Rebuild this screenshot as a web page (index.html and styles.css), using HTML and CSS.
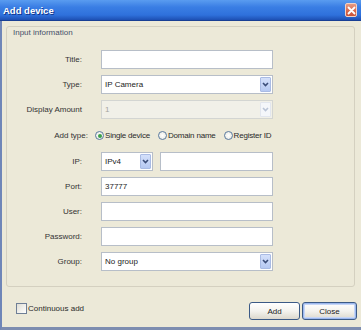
FILE: index.html
```html
<!DOCTYPE html>
<html lang="en">
<head>
    <meta charset="UTF-8">
    <title>Add device</title>
    <link rel="stylesheet" href="styles.css">
</head>
<body>
    <div class="window">
        <div class="titlebar">
            <span class="title">Add device</span>
            <span class="close-x">
                <svg width="9" height="9" viewBox="0 0 9 9"><path d="M1.5 1.5 L7.5 7.5 M7.5 1.5 L1.5 7.5" stroke="#fff" stroke-width="1.8" stroke-linecap="round"/></svg>
            </span>
        </div>

        <div class="groupbox">
            <div class="group-label">Input information</div>
            <div class="form">
                <span class="label">Title:</span>
                <div class="field"></div>

                <span class="label">Type:</span>
                <div class="field select">
                    <span class="value">IP Camera</span>
                    <span class="arrow">
                        <svg width="7" height="5" viewBox="0 0 7 5"><path d="M1 1 L3.5 3.5 L6 1" fill="none" stroke="#3b4d78" stroke-width="1.6"/></svg>
                    </span>
                </div>

                <span class="label">Display Amount</span>
                <div class="field select disabled">
                    <span class="value">1</span>
                    <span class="arrow">
                        <svg width="7" height="5" viewBox="0 0 7 5"><path d="M1 1 L3.5 3.5 L6 1" fill="none" stroke="#b9c3d6" stroke-width="1.6"/></svg>
                    </span>
                </div>

                <span class="label add-label">Add type:</span>
                <div class="radios">
                    <span class="radio checked"></span><span class="radio-text">Single device</span>
                    <span class="radio"></span><span class="radio-text">Domain name</span>
                    <span class="radio"></span><span class="radio-text">Register ID</span>
                </div>

                <span class="label">IP:</span>
                <div class="ip-row">
                    <div class="field select ip-type">
                        <span class="value">IPv4</span>
                        <span class="arrow">
                            <svg width="7" height="5" viewBox="0 0 7 5"><path d="M1 1 L3.5 3.5 L6 1" fill="none" stroke="#3b4d78" stroke-width="1.6"/></svg>
                        </span>
                    </div>
                    <div class="field ip-addr"></div>
                </div>

                <span class="label">Port:</span>
                <div class="field"><span class="value">37777</span></div>

                <span class="label">User:</span>
                <div class="field"></div>

                <span class="label">Password:</span>
                <div class="field"></div>

                <span class="label">Group:</span>
                <div class="field select">
                    <span class="value">No group</span>
                    <span class="arrow">
                        <svg width="7" height="5" viewBox="0 0 7 5"><path d="M1 1 L3.5 3.5 L6 1" fill="none" stroke="#3b4d78" stroke-width="1.6"/></svg>
                    </span>
                </div>
            </div>
        </div>

        <div class="footer">
            <div class="check">
                <span class="checkbox"></span>
                <span>Continuous add</span>
            </div>
            <div class="buttons">
                <span class="btn">Add</span>
                <span class="btn default">Close</span>
            </div>
        </div>
    </div>
</body>
</html>
```

FILE: styles.css
```css
*{
    box-sizing: border-box;
}

body{
    margin: 0;
    background: #ece9d8;
    font-family: 'Liberation Sans', Arial, sans-serif;
    font-size: 8px;
    color: #2a2a2a;
}

.window{
    width: 361px;
    height: 330px;
    background: #ece9d8;
    border-left: 2px solid #6f86b8;
    border-bottom: 3px solid #7d8db0;
}

.titlebar{
    height: 21px;
    display: flex;
    align-items: center;
    justify-content: space-between;
    padding: 0 4px 0 0;
    margin-left: -2px;
    background: linear-gradient(180deg, #5a9cf0 0%, #3a7ee4 35%, #2f71dc 75%, #1d4fb3 100%);
    border-bottom: 1px solid #183f94;
}

.title{
    color: #fff;
    font-weight: 700;
    font-size: 9.5px;
    padding-left: 3px;
    text-shadow: 1px 1px 0 #10358a;
}

.close-x{
    width: 12px;
    height: 14px;
    display: flex;
    align-items: center;
    justify-content: center;
    border: 1px solid #f2d2c6;
    border-radius: 2px;
    background: linear-gradient(180deg, #e59c84, #d8654a 60%, #c9533a);
}

.groupbox{
    margin: 5px 6px 0 4px;
    height: 261px;
    border: 1px solid #d4d0c0;
    border-radius: 3px;
    padding: 1px 0 0 0;
}

.group-label{
    line-height: 10px;
    padding-left: 6px;
    color: #46506a;
}

.form{
    margin-top: 12px;
    display: grid;
    grid-template-columns: 75px 172px;
    grid-template-rows: 19px 19px 19px 21px 19px 19px 19px 19px 19px;
    column-gap: 19px;
    row-gap: 6px;
    align-items: center;
}

.label{
    text-align: right;
    color: #333;
    white-space: nowrap;
}

.add-label{
    margin-right: -6px;
}

.field{
    height: 19px;
    background: #fff;
    border: 1px solid #b7bec8;
    display: flex;
    align-items: center;
    justify-content: space-between;
    padding: 0 1px 0 3px;
}

.value{
    color: #222;
}

.arrow{
    width: 11px;
    height: 15px;
    display: flex;
    align-items: center;
    justify-content: center;
    background: linear-gradient(180deg, #d4e0fa, #b6c9f2);
    border: 1px solid #a9bbe4;
    border-radius: 1px;
}

.disabled{
    background: #f1f0e8;
    border-color: #d3d5d2;
}

.disabled .value{
    color: #a5a5a0;
}

.disabled .arrow{
    background: #f4f6fa;
    border-color: #e2e6ee;
}

.radios{
    display: flex;
    align-items: center;
    margin-left: -6px;
    white-space: nowrap;
}

.radio{
    flex: none;
    width: 9px;
    height: 9px;
    border-radius: 50%;
    border: 1px solid #5a7aa0;
    background: radial-gradient(circle, #fff, #e4e6de);
    display: flex;
    align-items: center;
    justify-content: center;
    margin-right: 1px;
}

.radio.checked::after{
    content: "";
    width: 4px;
    height: 4px;
    border-radius: 50%;
    background: #3aa04a;
}

.radio-text{
    flex: none;
    margin-right: 8px;
    letter-spacing: -0.2px;
}

.radio-text:last-child{
    margin-right: 0;
}

.ip-row{
    display: flex;
    gap: 7px;
}

.ip-type{
    width: 52px;
    flex: none;
}

.ip-addr{
    flex: 1;
}

.footer{
    display: flex;
    justify-content: space-between;
    align-items: flex-start;
    margin-top: 15px;
    padding: 0 4px 0 14px;
}

.check{
    display: flex;
    align-items: center;
    gap: 1px;
    margin-top: 1px;
}

.checkbox{
    width: 11px;
    height: 11px;
    border: 1px solid #6f7f96;
    background: linear-gradient(135deg, #e0ded4, #fff);
}

.buttons{
    display: flex;
    gap: 2px;
}

.btn{
    height: 18px;
    width: 51px;
    display: flex;
    align-items: center;
    justify-content: center;
    border: 1px solid #3b5a86;
    border-radius: 3px;
    background: linear-gradient(180deg, #ffffff 0%, #f4f3ee 50%, #dcd8cd 100%);
    color: #222;
}

.btn.default{
    width: 55px;
    box-shadow: inset 0 0 0 1px #9cb8ee, inset 0 0 0 2px #c6d6f6;
}
```
